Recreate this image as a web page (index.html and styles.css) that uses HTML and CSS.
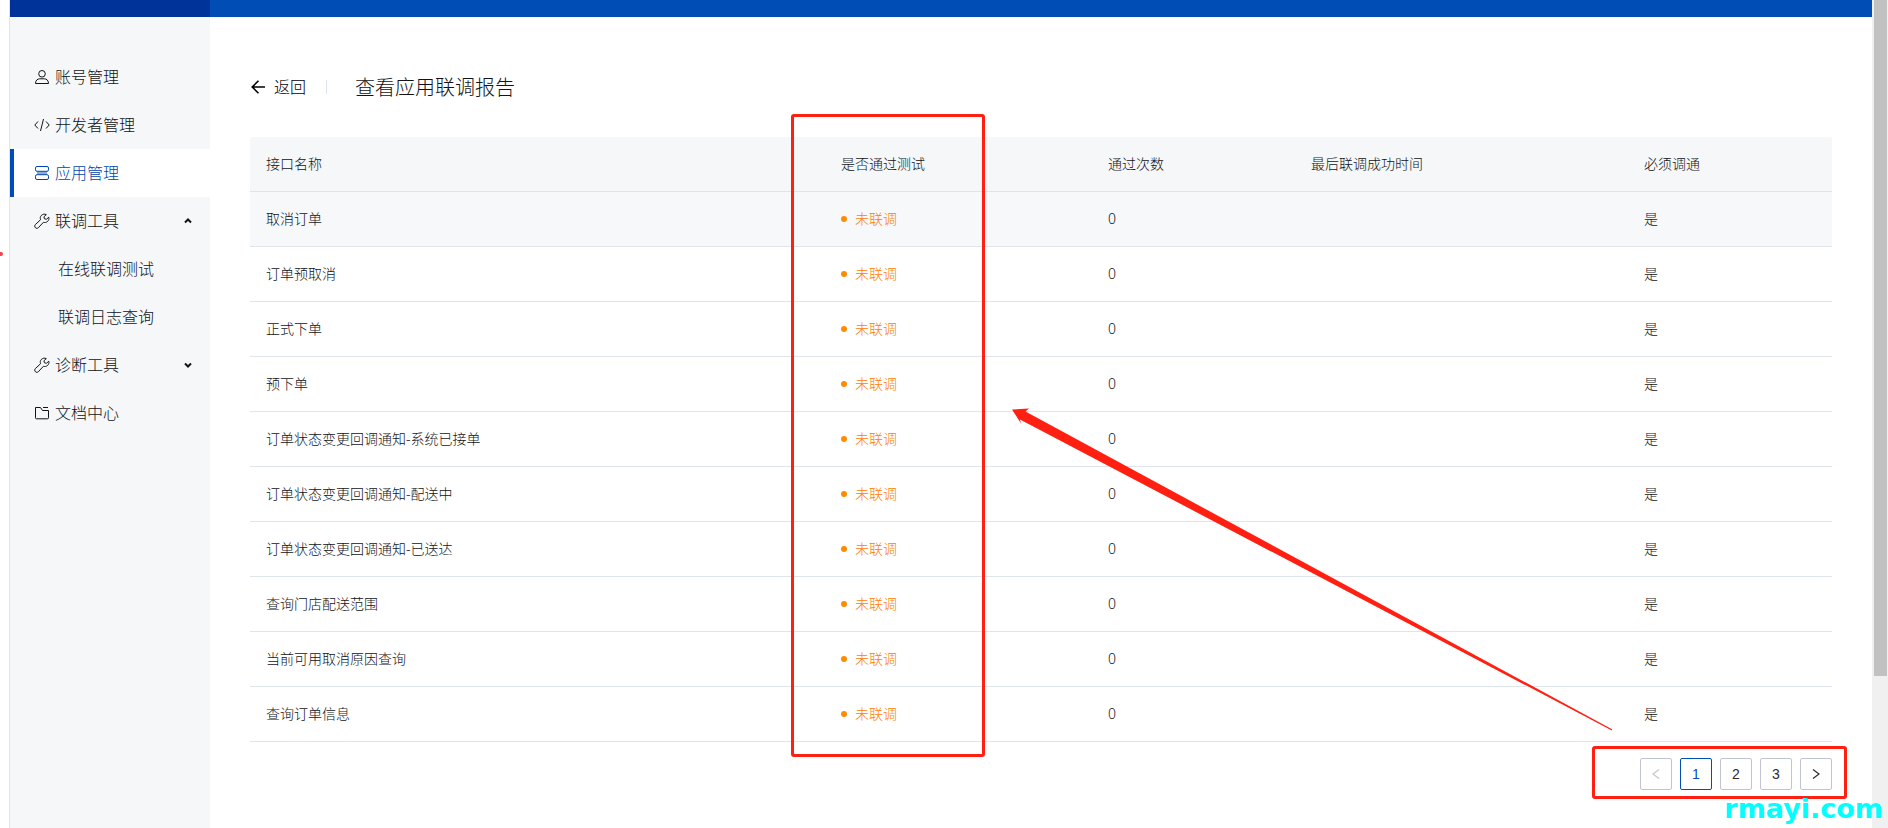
FILE: index.html
```html
<!DOCTYPE html>
<html lang="zh-CN">
<head>
<meta charset="utf-8">
<title>查看应用联调报告</title>
<link rel="stylesheet" href="styles.css">
</head>
<body>
<svg class="defs" aria-hidden="true">
  <symbol id="wrench" viewBox="0 0 16 16"><path d="M14.800 4.200 12.400 6.300l-2-.6-.5-1.900L12.300 1.600C10.500 .7 8.400 1.200 7.200 2.600c-1 1.200-1.200 2.600-.6 4.100L1.400 11.500c-.9.900-.9 2.300 0 3.200s2.200.8 3.100-.1l4.900-5.300c1.500.5 3.100.2 4.300-1 1.100-1.100 1.500-2.600 1.100-4.100z"/></symbol>
  <symbol id="chevron" viewBox="0 0 8 8"><path d="M1 5.500 4 2.500l3 3"/></symbol>
</svg>
<div class="app">
  <div class="gutter"><span class="mark"></span></div>
  <aside class="side">
    <div class="brand"></div>
    <nav class="menu">
      <a class="item" href="#"><svg class="icon" viewBox="0 0 16 16"><circle cx="8" cy="4.800" r="3.300"/><path d="M1.500 14.500c0-3.200 2-4.700 4.200-4.700h4.600c2.200 0 4.200 1.500 4.200 4.700z"/></svg>账号管理</a>
      <a class="item" href="#"><svg class="icon" viewBox="0 0 16 16"><path d="M4 4.500.8 8 4 11.500M12 4.500 15.200 8 12 11.500M9.500 2l-3 12"/></svg>开发者管理</a>
      <a class="item active" href="#"><svg class="icon" viewBox="0 0 16 16"><rect x="1.500" y="1.500" width="13" height="4.800" rx="1.500"/><rect x="1.500" y="9.700" width="13" height="4.800" rx="1.500"/><path class="band" d="M3 8h10"/></svg>应用管理</a>
      <a class="item" href="#"><svg class="icon"><use href="#wrench"/></svg>联调工具<svg class="chev"><use href="#chevron"/></svg></a>
      <a class="item sub" href="#">在线联调测试</a>
      <a class="item sub" href="#">联调日志查询</a>
      <a class="item" href="#"><svg class="icon"><use href="#wrench"/></svg>诊断工具<svg class="chev down"><use href="#chevron"/></svg></a>
      <a class="item" href="#"><svg class="icon" viewBox="0 0 16 16"><path d="M1.500 2.500h5l2 3h6v7.300q0 1-1 1h-11q-1 0-1-1zM9 2.500h5"/></svg>文档中心</a>
    </nav>
  </aside>
  <div class="content">
    <div class="topbar"></div>
    <main class="main">
      <header class="head">
        <button class="back" type="button"><svg class="arrow" viewBox="0 0 14 14"><path d="M7.500 .8 1.200 7l6.300 6.200M1.200 7H14"/></svg>返回</button>
        <span class="rule"></span>
        <h1 class="title">查看应用联调报告</h1>
      </header>
      <div class="report">
        <table class="table">
          <colgroup><col class="c-name"><col class="c-pass"><col class="c-count"><col class="c-time"><col class="c-must"></colgroup>
          <thead><tr><th>接口名称</th><th>是否通过测试</th><th>通过次数</th><th>最后联调成功时间</th><th>必须调通</th></tr></thead>
          <tbody>
            <tr class="hover"><td>取消订单</td><td><span class="status">未联调</span></td><td>0</td><td></td><td>是</td></tr>
            <tr><td>订单预取消</td><td><span class="status">未联调</span></td><td>0</td><td></td><td>是</td></tr>
            <tr><td>正式下单</td><td><span class="status">未联调</span></td><td>0</td><td></td><td>是</td></tr>
            <tr><td>预下单</td><td><span class="status">未联调</span></td><td>0</td><td></td><td>是</td></tr>
            <tr><td>订单状态变更回调通知-系统已接单</td><td><span class="status">未联调</span></td><td>0</td><td></td><td>是</td></tr>
            <tr><td>订单状态变更回调通知-配送中</td><td><span class="status">未联调</span></td><td>0</td><td></td><td>是</td></tr>
            <tr><td>订单状态变更回调通知-已送达</td><td><span class="status">未联调</span></td><td>0</td><td></td><td>是</td></tr>
            <tr><td>查询门店配送范围</td><td><span class="status">未联调</span></td><td>0</td><td></td><td>是</td></tr>
            <tr><td>当前可用取消原因查询</td><td><span class="status">未联调</span></td><td>0</td><td></td><td>是</td></tr>
            <tr><td>查询订单信息</td><td><span class="status">未联调</span></td><td>0</td><td></td><td>是</td></tr>
          </tbody>
        </table>
        <div class="box box-column"></div>
        <svg class="pointer" viewBox="0 0 600 323" preserveAspectRatio="none"><path d="M0 1.500 17 .5 13.500 3.500 600 321.500 599.500 322.500 8 11.500 9 15.500z"/></svg>
      </div>
      <nav class="pages" aria-label="分页">
        <button class="page" type="button" disabled aria-label="上一页"><svg class="nav" viewBox="0 0 8 12"><path d="M7 1.500 1 6l6 4.500"/></svg></button>
        <button class="page current" type="button">1</button>
        <button class="page" type="button">2</button>
        <button class="page" type="button">3</button>
        <button class="page" type="button" aria-label="下一页"><svg class="nav" viewBox="0 0 8 12"><path d="M1 1.500 7 6l-6 4.500"/></svg></button>
        <div class="box box-pages"></div>
      </nav>
    </main>
  </div>
  <div class="scroll"><div class="thumb"></div></div>
  <div class="watermark">rmayi.com</div>
</div>
</body>
</html>
```

FILE: styles.css
```css
* { box-sizing: border-box; }

body {
  margin: 0;
  background: #fff;
  color: #111317;
  font: 300 14px/22px "Noto Sans", "Noto Sans CJK SC", sans-serif;
}

.defs { display: none; }

svg {
  fill: none;
  stroke: currentColor;
}

.app {
  position: relative;
  display: flex;
  height: 100vh;
  overflow: hidden;
}

.gutter {
  position: relative;
  flex: none;
  width: 10px;
  border-right: 1px solid #e3e4e6;
}

.mark {
  position: absolute;
  top: 252px;
  left: 0;
  width: 3px;
  height: 4px;
  border-radius: 0 2px 2px 0;
  background: #f5414b;
}

.side {
  flex: none;
  width: 200px;
  background: #f5f7f9;
}

.brand {
  height: 17px;
  background: #003399;
}

.menu { padding-top: 36px; }

.item {
  display: flex;
  align-items: center;
  gap: 5px;
  height: 48px;
  padding: 0 18px 0 24px;
  color: #111317;
  font-size: 16px;
  text-decoration: none;
}

.item.sub { padding-left: 48px; }

.item.active {
  padding-left: 20px;
  border-left: 4px solid #004eb5;
  background: #fff;
  color: #0045ad;
}

.icon {
  width: 16px;
  height: 16px;
  stroke-width: 1;
}

.band {
  opacity: .45;
  stroke-width: 3;
}

.chev {
  width: 8px;
  height: 8px;
  margin-left: auto;
  stroke-width: 2;
}

.chev.down { transform: rotate(180deg); }

.content {
  flex: 1;
  min-width: 0;
}

.topbar {
  height: 17px;
  background: #004eb5;
}

.main { padding: 56px 40px 0; }

.head {
  display: flex;
  align-items: center;
  height: 28px;
  margin-bottom: 36px;
}

.back {
  display: flex;
  align-items: center;
  gap: 9px;
  padding: 0;
  border: 0;
  background: none;
  color: #000;
  font: inherit;
  font-size: 16px;
}

.arrow {
  width: 14px;
  height: 14px;
  margin-left: 1px;
  stroke-width: 1.6;
}

.rule {
  width: 1px;
  height: 14px;
  margin: 0 28px 0 20px;
  background: #dfe3ec;
}

.title {
  margin: 0;
  padding-top: 2px;
  font-size: 20px;
  font-weight: 300;
  line-height: 28px;
}

.report { position: relative; }

.table {
  width: 100%;
  table-layout: fixed;
  border-collapse: separate;
  border-spacing: 0;
}

.c-name { width: 36.35%; }
.c-pass { width: 16.88%; }
.c-count { width: 12.83%; }
.c-time { width: 21.05%; }
.c-must { width: 12.89%; }

th,
td {
  height: 55px;
  padding: 0 16px;
  border-bottom: 1px solid #dfe4ed;
  font-weight: 300;
  text-align: left;
}

th { background: #f5f7f9; }
th:first-child { border-top-left-radius: 2px; }
th:last-child { border-top-right-radius: 2px; }
.hover td { background: #f6f8fa; }

.status {
  display: flex;
  align-items: center;
  gap: 8px;
  color: #ff8000;
}

.status::before {
  content: "";
  width: 6px;
  height: 6px;
  border-radius: 50%;
  background: #ff8c00;
}

.pages {
  position: relative;
  display: flex;
  justify-content: flex-end;
  gap: 8px;
  padding-top: 16px;
}

.page {
  display: flex;
  align-items: center;
  justify-content: center;
  width: 32px;
  height: 32px;
  padding: 0;
  border: 1px solid #c0c4d0;
  border-radius: 2px;
  background: #fff;
  color: #2b2d31;
  font: 14px/22px "Liberation Sans", sans-serif;
}

.page.current {
  border-color: #004eb5;
  color: #004eb5;
}

.page:disabled { color: #c4c6cc; }

.nav {
  width: 8px;
  height: 12px;
  stroke-width: 1.2;
}

.box {
  position: absolute;
  border: 3px solid #ff2012;
  border-radius: 3px;
  pointer-events: none;
}

.box-column {
  top: -23px;
  bottom: -15px;
  left: 34.2%;
  width: 194px;
}

.box-pages {
  top: 4px;
  right: -15px;
  width: 255px;
  height: 53px;
}

.pointer {
  position: absolute;
  top: 271px;
  left: 48.15%;
  width: 37.95%;
  height: 323px;
  fill: #ff2012;
  stroke: none;
  pointer-events: none;
}

.scroll {
  flex: none;
  width: 16px;
  padding: 0 1px 0 2px;
  background: #f0f0f0;
}

.thumb {
  height: 676px;
  background: #c1c1c1;
}

.watermark {
  position: absolute;
  right: 5px;
  bottom: 3px;
  color: #00ffff;
  font: bold 27px/32px "DejaVu Sans", sans-serif;
}
```
